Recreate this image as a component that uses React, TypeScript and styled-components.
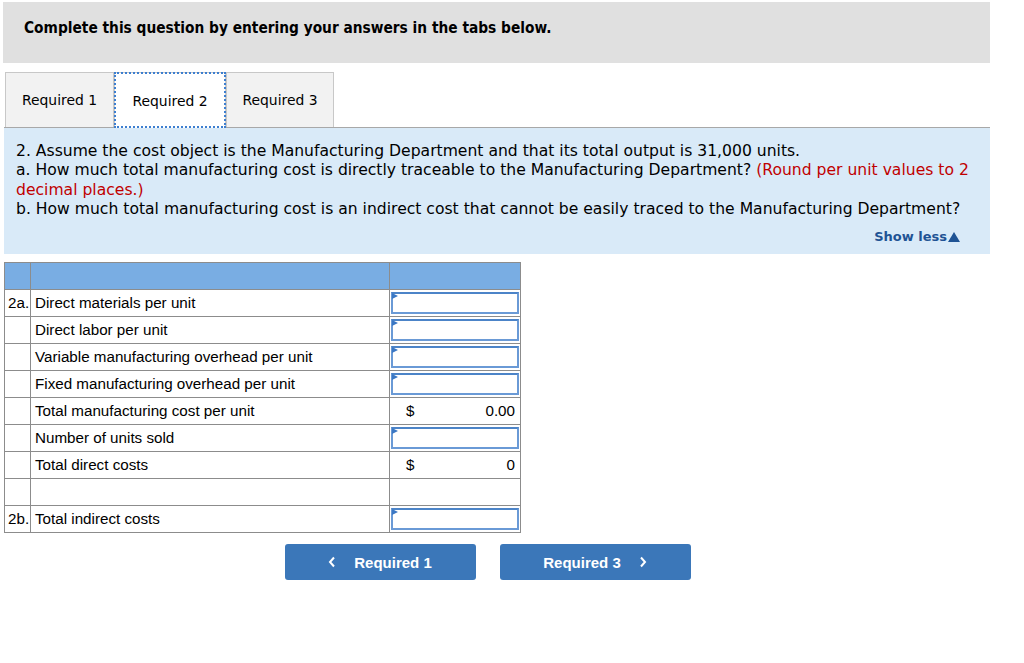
import React from 'react';
import styled, { createGlobalStyle } from 'styled-components';

const GlobalStyle = createGlobalStyle`
  html, body {
    margin: 0;
    padding: 0;
    background: #ffffff;
  }
  body {
    font-family: 'DejaVu Sans', Verdana, sans-serif;
    color: #000000;
  }
`;

const Page = styled.div`
  width: 986px;
  padding: 2px 0 0 4px;
`;

const Banner = styled.div`
  height: 61px;
  box-sizing: border-box;
  margin-left: -1px;
  background: #e0e0e0;
  padding: 17px 0 0 21px;
  font-family: 'DejaVu Sans Condensed', 'DejaVu Sans', sans-serif;
  font-weight: bold;
  font-size: 15.3px;
`;

const TabBar = styled.div`
  display: flex;
  margin-top: 9px;
  padding-left: 1px;
  border-bottom: 1px solid #a8a8a8;
`;

const Tab = styled.div<{ $active?: boolean; $w: number }>`
  box-sizing: border-box;
  display: flex;
  align-items: center;
  justify-content: center;
  font-family: 'DejaVu Sans', Verdana, sans-serif;
  font-size: 13.9px;
  background: ${p => (p.$active ? '#ffffff' : '#f2f2f2')};
  border: 1px solid #c8c8c8;
  border-bottom: none;
  margin-bottom: ${p => (p.$active ? '-1px' : '0')};
  height: ${p => (p.$active ? '56px' : '55px')};
  outline: ${p => (p.$active ? '2px dotted #3d7fd0' : 'none')};
  outline-offset: -2px;
  width: ${p => p.$w}px;
`;

const Prompt = styled.div`
  background: #d9eaf8;
  height: 126px;
  box-sizing: border-box;
  padding: 14px 12px 0 12px;
  font-size: 15.6px;
  line-height: 19.4px;
`;

const Hint = styled.span`
  color: #c00000;
`;

const ShowLess = styled.div`
  display: flex;
  justify-content: flex-end;
  align-items: center;
  margin-top: 9px;
  padding-right: 18px;
  font-weight: bold;
  font-size: 13px;
  line-height: 16px;
  color: #1f5394;
  gap: 1px;
`;

const Table = styled.table`
  margin-top: 8px;
  border-collapse: collapse;
  font-family: 'Liberation Sans', Arial, sans-serif;
  font-size: 15.2px;
  table-layout: fixed;
  width: 516px;
`;

const Head = styled.th`
  background: #79ade3;
  border: 1px solid #8c8c8c;
  height: 26px;
  padding: 0;
`;

const Cell = styled.td`
  border: 1px solid #8c8c8c;
  height: 24px;
  padding: 0 4px 2px 4px;
  white-space: nowrap;
`;

const Tag = styled(Cell)`
  padding: 0 0 2px 3px;
`;

const InputCell = styled.td`
  border: 1px solid #8c8c8c;
  padding: 1px;
`;

const InputBox = styled.div`
  height: 22px;
  border: 2px solid #6a9ad6;
  border-top-color: #4c84c8;
  box-sizing: border-box;
  background: #ffffff;
  position: relative;
  &::before {
    content: '';
    position: absolute;
    left: -1px;
    top: -1px;
    border-top: 3px solid transparent;
    border-bottom: 3px solid transparent;
    border-left: 6px solid #3b78c4;
  }
`;

const Money = styled.div`
  display: flex;
  justify-content: space-between;
  padding: 0 1px 0 12px;
`;

const Nav = styled.div`
  display: flex;
  justify-content: center;
  gap: 24px;
  margin-top: 11px;
  padding-right: 19px;
`;

const NavButton = styled.button`
  width: 191px;
  height: 36px;
  background: #3b77b9;
  border: none;
  border-radius: 3px;
  color: #ffffff;
  font-family: 'Liberation Sans', Arial, sans-serif;
  font-weight: bold;
  font-size: 15px;
  display: flex;
  align-items: center;
  justify-content: center;
  gap: 18px;
  padding: 0;
`;

const Chevron = ({ dir }: { dir: 'left' | 'right' }) => (
  <svg width="8" height="12" viewBox="0 0 8 12">
    <polyline
      points={dir === 'left' ? '6,1.5 2,6 6,10.5' : '2,1.5 6,6 2,10.5'}
      fill="none"
      stroke="#ffffff"
      strokeWidth="2"
    />
  </svg>
);

type Row = { tag?: string; label: string; kind: 'input' | 'money' | 'blank'; value?: string };

const rows: Row[] = [
  { tag: '2a.', label: 'Direct materials per unit', kind: 'input' },
  { label: 'Direct labor per unit', kind: 'input' },
  { label: 'Variable manufacturing overhead per unit', kind: 'input' },
  { label: 'Fixed manufacturing overhead per unit', kind: 'input' },
  { label: 'Total manufacturing cost per unit', kind: 'money', value: '0.00' },
  { label: 'Number of units sold', kind: 'input' },
  { label: 'Total direct costs', kind: 'money', value: '0' },
  { label: '', kind: 'blank' },
  { tag: '2b.', label: 'Total indirect costs', kind: 'input' },
];

export default function App() {
  return (
    <Page>
      <GlobalStyle />
      <Banner>Complete this question by entering your answers in the tabs below.</Banner>

      <TabBar>
        <Tab $w={109}>Required 1</Tab>
        <Tab $w={112} $active>Required 2</Tab>
        <Tab $w={108}>Required 3</Tab>
      </TabBar>

      <Prompt>
        2. Assume the cost object is the Manufacturing Department and that its total output is 31,000 units.
        <br />
        a. How much total manufacturing cost is directly traceable to the Manufacturing Department?{' '}
        <Hint>(Round per unit values to 2 decimal places.)</Hint>
        <br />
        b. How much total manufacturing cost is an indirect cost that cannot be easily traced to the Manufacturing Department?
        <ShowLess>
          Show less
          <svg width="12" height="10" viewBox="0 0 12 10">
            <polygon points="6,0 12,10 0,10" fill="#1f5394" />
          </svg>
        </ShowLess>
      </Prompt>

      <Table>
        <colgroup>
          <col style={{ width: 26 }} />
          <col style={{ width: 359 }} />
          <col style={{ width: 131 }} />
        </colgroup>
        <thead>
          <tr>
            <Head />
            <Head />
            <Head />
          </tr>
        </thead>
        <tbody>
          {rows.map((r, i) => (
            <tr key={i}>
              <Tag>{r.tag}</Tag>
              <Cell>{r.label}</Cell>
              {r.kind === 'input' && (
                <InputCell>
                  <InputBox />
                </InputCell>
              )}
              {r.kind === 'money' && (
                <Cell>
                  <Money>
                    <span>$</span>
                    <span>{r.value}</span>
                  </Money>
                </Cell>
              )}
              {r.kind === 'blank' && <Cell />}
            </tr>
          ))}
        </tbody>
      </Table>

      <Nav>
        <NavButton>
          <Chevron dir="left" />
          Required 1
        </NavButton>
        <NavButton>
          Required 3
          <Chevron dir="right" />
        </NavButton>
      </Nav>
    </Page>
  );
}
